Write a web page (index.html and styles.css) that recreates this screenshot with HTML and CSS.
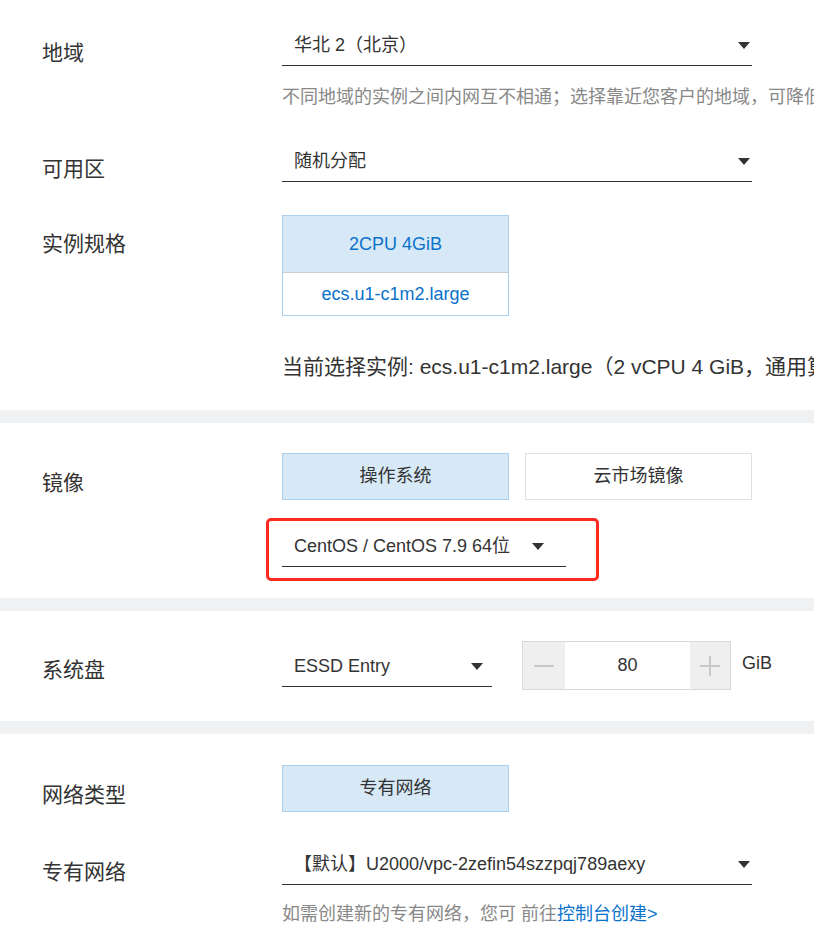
FILE: index.html
```html
<!DOCTYPE html>
<html lang="zh-CN">
<head>
<meta charset="utf-8">
<title>ECS</title>
<link rel="stylesheet" href="styles.css">
</head>
<body>
<div class="page">
  <section class="sec sec-1">
    <div class="row">
      <div class="label">地域</div>
      <div class="content">
        <div class="select w-full"><span class="val">华北 2（北京）</span><span class="arrow"></span></div>
        <div class="hint">不同地域的实例之间内网互不相通；选择靠近您客户的地域，可降低网络时延、提高您客户的访问速度。</div>
      </div>
    </div>
    <div class="row gap">
      <div class="label">可用区</div>
      <div class="content">
        <div class="select w-full"><span class="val">随机分配</span><span class="arrow"></span></div>
      </div>
    </div>
    <div class="row gap">
      <div class="label">实例规格</div>
      <div class="content">
        <div class="spec">
          <div class="spec-top">2CPU 4GiB</div>
          <div class="spec-bottom">ecs.u1-c1m2.large</div>
        </div>
        <div class="current">当前选择实例: ecs.u1-c1m2.large（2 vCPU 4 GiB，通用算力型 u1）</div>
      </div>
    </div>
  </section>
  <div class="band"></div>
  <section class="sec sec-2">
    <div class="row">
      <div class="label lb-btn">镜像</div>
      <div class="content">
        <div class="btns">
          <div class="btn on">操作系统</div>
          <div class="btn">云市场镜像</div>
        </div>
        <div class="mark">
          <div class="select w-os"><span class="val">CentOS / CentOS 7.9 64位</span><span class="arrow"></span></div>
        </div>
      </div>
    </div>
  </section>
  <div class="band"></div>
  <section class="sec sec-3">
    <div class="row">
      <div class="label">系统盘</div>
      <div class="content disk">
        <div class="select w-disk"><span class="val">ESSD Entry</span><span class="arrow"></span></div>
        <div class="num">
          <div class="step minus"><span class="bar"></span></div>
          <div class="num-val">80</div>
          <div class="step plus"><span class="bar"></span><span class="bar v"></span></div>
        </div>
        <div class="unit">GiB</div>
      </div>
    </div>
  </section>
  <div class="band"></div>
  <section class="sec sec-4">
    <div class="row">
      <div class="label lb-btn">网络类型</div>
      <div class="content">
        <div class="btns"><div class="btn on">专有网络</div></div>
      </div>
    </div>
    <div class="row gap">
      <div class="label">专有网络</div>
      <div class="content">
        <div class="select w-full"><span class="val">【默认】U2000/vpc-2zefin54szzpqj789aexy</span><span class="arrow"></span></div>
        <div class="hint hint-vpc">如需创建新的专有网络，您可 前往<a class="link" href="#">控制台创建&gt;</a></div>
      </div>
    </div>
  </section>
</div>
</body>
</html>
```

FILE: styles.css
```css
html, body {
  margin: 0;
  padding: 0;
  background: #fff;
}
body {
  width: 814px;
  height: 928px;
  overflow: hidden;
  font-family: "Liberation Sans", "Noto Sans CJK SC", sans-serif;
  color: #333;
}
.page {
  width: 814px;
  overflow: hidden;
}
.sec {
  background: #fff;
  white-space: nowrap;
}
.sec-1 { padding: 24px 0 28px; }
.sec-2 { padding: 30px 0 17px; }
.sec-3 { padding: 30px 0 31px; }
.sec-4 { padding: 31px 0 0; }
.band {
  height: 13px;
  background: #f0f1f3;
}
.row {
  display: flex;
  align-items: flex-start;
}
.row.gap { margin-top: 31px; }
.label {
  width: 282px;
  padding-left: 42px;
  box-sizing: border-box;
  flex: none;
  font-size: 21px;
  line-height: 30px;
  padding-top: 14px;
  color: #333;
}
.label.lb-btn { padding-top: 15px; }
.content {
  flex: none;
}
.select {
  position: relative;
  height: 41px;
  border-bottom: 1px solid #333;
  box-sizing: content-box;
  display: flex;
  align-items: center;
  padding-left: 12px;
  font-size: 18px;
  color: #333;
}
.select .val {
  line-height: 40px;
}
.select .arrow {
  position: absolute;
  top: 18px;
  width: 0;
  height: 0;
  border-left: 6px solid transparent;
  border-right: 6px solid transparent;
  border-top: 7px solid #333;
}
.w-full { width: 458px; }
.w-full .arrow { right: 2px; }
.w-os { width: 272px; }
.w-os .arrow { right: 22px; }
.w-disk { width: 198px; }
.w-disk .arrow { right: 9px; }
.hint {
  margin-top: 19px;
  font-size: 18px;
  line-height: 24px;
  color: #888;
}
.hint-vpc { margin-top: 17px; }
.link {
  color: #0a72cc;
  text-decoration: none;
}
.spec {
  width: 227px;
  border: 1px solid #acd1f0;
  box-sizing: border-box;
  text-align: center;
  font-size: 18px;
  color: #0a72cc;
}
.spec-top {
  height: 56px;
  line-height: 56px;
  background: #d7e9f6;
  border-bottom: 1px solid #c9cdd2;
}
.spec-bottom {
  height: 42px;
  line-height: 42px;
  background: #fff;
}
.current {
  margin-top: 36px;
  font-size: 21px;
  line-height: 30px;
  color: #333;
}
.btns {
  display: flex;
  gap: 16px;
}
.btn {
  width: 227px;
  height: 47px;
  box-sizing: border-box;
  border: 1px solid #e1e1e1;
  background: #fff;
  text-align: center;
  line-height: 45px;
  font-size: 18px;
  color: #333;
}
.btn.on {
  background: #d7e9f6;
  border-color: #acd1f0;
}
.mark {
  display: inline-block;
  margin: 18px 0 0 -16px;
  padding: 4px 30px 11px 13px;
  border: 3px solid #ff2a1f;
  border-radius: 5px;
}
.disk {
  display: flex;
  align-items: flex-start;
}
.disk .select { margin-top: 4px; }
.num {
  margin-left: 30px;
  width: 209px;
  height: 49px;
  box-sizing: border-box;
  border: 1px solid #d9d9d9;
  display: flex;
}
.step {
  position: relative;
  flex: none;
  width: 42px;
  background: #efefef;
}
.step.plus { width: 40px; }
.step .bar {
  position: absolute;
  left: 50%;
  top: 50%;
  width: 20px;
  height: 2px;
  margin: -1px 0 0 -10px;
  background: #c8c8c8;
}
.step .bar.v {
  width: 2px;
  height: 20px;
  margin: -10px 0 0 -1px;
}
.num-val {
  flex: 1;
  text-align: center;
  line-height: 47px;
  font-size: 18px;
  color: #333;
  background: #fff;
}
.unit {
  margin-left: 11px;
  line-height: 45px;
  font-size: 18px;
  color: #333;
}
```
